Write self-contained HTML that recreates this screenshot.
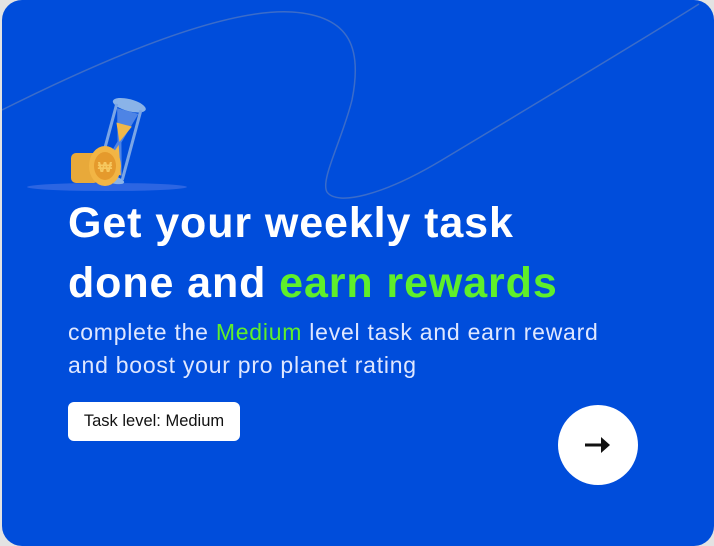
<!DOCTYPE html>
<html><head><style>
html,body{margin:0;padding:0;width:714px;height:546px;background:#e3e3e3;overflow:hidden}
.card{position:absolute;left:2px;top:0;width:712px;height:546px;background:#004ddb;border-radius:20px;overflow:hidden;font-family:"Liberation Sans",sans-serif}
h1{position:absolute;left:66px;top:193px;margin:0;color:#fff;font-size:43px;line-height:60px;font-weight:bold;letter-spacing:0.9px}
.g{color:#5fef2a}
p{position:absolute;left:66px;top:316px;margin:0;color:#dfe7ff;font-size:23px;line-height:33px;letter-spacing:0.75px}
.btn{position:absolute;left:66px;top:402px;width:172px;height:39px;background:#fff;border-radius:6px;color:#111;font-size:16.5px;line-height:39px;text-align:center}
.circ{position:absolute;left:556px;top:405px;width:80px;height:80px;border-radius:50%;background:#fff}
</style></head><body>
<div class="card">
<svg width="712" height="546" style="position:absolute;left:0;top:0">
<path d="M0 110 C100 60 220 8 290 12 C350 16 360 50 350 100 C340 140 318 180 325 192 C335 206 380 196 440 160 C540 100 640 40 697 4" fill="none" stroke="#4a74c4" stroke-width="1.5" opacity="0.8"/>
<ellipse cx="105" cy="187" rx="80" ry="4" fill="#3f6fe6" opacity="0.7"/>
<g transform="rotate(15 118 140)">
<ellipse cx="118" cy="104" rx="17" ry="6" fill="#8ab3e8"/>
<rect x="104" y="106" width="3" height="72" fill="#7aa5e6"/>
<rect x="129" y="106" width="3" height="72" fill="#7aa5e6"/>
<path d="M107 110 L129 110 L120 142 L129 174 L107 174 L116 142Z" fill="#9bbcf0" opacity="0.5"/>
<path d="M110 124 L126 124 L118 142Z" fill="#f0b84a"/>
<path d="M118 145 L128 174 L108 174Z" fill="#f0b84a"/>
<ellipse cx="118" cy="180" rx="15" ry="4" fill="#8ab3e8"/>
</g>
<rect x="69" y="153" width="28" height="30" rx="5" fill="#e8a93a"/>
<ellipse cx="103" cy="166" rx="16" ry="20" fill="#f2b544"/>
<ellipse cx="103" cy="166" rx="11" ry="14" fill="#e59a2c"/>
<text x="103" y="172" fill="#f6c860" font-size="15" font-weight="bold" text-anchor="middle">₩</text>
</svg>
<h1>Get your weekly task<br>done and <span class="g">earn rewards</span></h1>
<p>complete the <span class="g">Medium</span> level task and earn reward<br>and boost your pro planet rating</p>
<div class="btn">Task level: Medium</div>
<div class="circ"><svg width="80" height="80"><path d="M27 40 H50" stroke="#111" stroke-width="3"/><path d="M43 32 L52 40 L43 48Z" fill="#111"/></svg></div>
</div>
</body></html>
